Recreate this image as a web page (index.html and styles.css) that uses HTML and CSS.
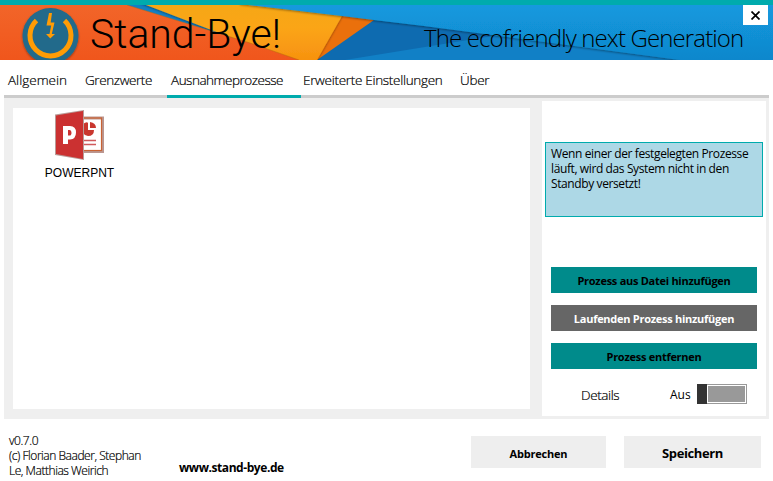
FILE: index.html
```html
<!DOCTYPE html>
<html lang="de">
<head>
<meta charset="utf-8">
<title>Stand-Bye!</title>
<link rel="stylesheet" href="styles.css">
</head>
<body>
<div class="window">
  <header class="banner">
    <svg class="banner-art" viewBox="0 5 773 55" width="773" height="55" aria-hidden="true">
      <defs>
        <linearGradient id="red" x1="0" y1="0" x2="0" y2="1"><stop offset="0" stop-color="#f26529"/><stop offset="1" stop-color="#f0561c"/></linearGradient>
        <linearGradient id="blue" x1="0" y1="0" x2="0" y2="1"><stop offset="0" stop-color="#139be0"/><stop offset="1" stop-color="#1087cc"/></linearGradient>
        <linearGradient id="gold" x1="0" y1="0" x2="0" y2="1"><stop offset="0" stop-color="#f3a813"/><stop offset=".5" stop-color="#fba519"/><stop offset="1" stop-color="#f7920f"/></linearGradient>
        <filter id="shade" x="-20%" y="-30%" width="140%" height="160%"><feDropShadow dx="0" dy="1" stdDeviation="1.2" flood-color="#000" flood-opacity=".4"/></filter>
      </defs>
      <rect y="5" width="773" height="55" fill="#1180c6"/>
      <path d="M374 20 505 34 345 60H310Z" fill="#0e6bb0"/>
      <path d="M342 10 374 20 317 60H290Z" fill="#ea700c"/>
      <path d="M120 -5H345L342 16 317 60H290Z" fill="url(#gold)" filter="url(#shade)"/>
      <path d="M0 5H127L250 43 299 60H0Z" fill="url(#red)"/>
      <path d="M127 5 250 43 299 60" fill="none" stroke="#b86a10" stroke-width="1" opacity=".5"/>
      <path d="M240 4 342 16 374 20 424 26 680 60H790V0H240Z" fill="url(#blue)" filter="url(#shade)"/>
      <circle cx="50.500" cy="36" r="28" fill="#206b8b" filter="url(#shade)"/>
      <path d="M36.500 20.500A20.500 20.500 0 1 0 64.500 20.500" fill="none" stroke="#ff9c05" stroke-width="5"/>
      <path d="M49 13H52L50.700 22.500H54.500L51.800 34H55L50.300 38.500 46 34H49.500L51.200 25.500H46.500Z" fill="#ff9c05"/>
    </svg>
    <h1 class="brand">Stand-Bye!</h1>
    <p class="tagline">The ecofriendly next Generation</p>
    <button class="close" aria-label="Schließen"><svg width="9" height="9" viewBox="0 0 9 9"><path d="M.5.5 8.500 8.500M8.500.5.5 8.500" stroke="#000" stroke-width="1.700"/></svg></button>
  </header>
  <nav class="tabs">
    <a class="tab t1">Allgemein</a><a class="tab t2">Grenzwerte</a><a class="tab t3 active">Ausnahmeprozesse</a><a class="tab t4">Erweiterte Einstellungen</a><a class="tab t5">Über</a>
  </nav>
  <main class="panel">
    <section class="processes">
      <div class="process">
        <svg width="50" height="51" viewBox="0 0 50 51" aria-hidden="true">
          <rect x="25" y="8" width="22.500" height="33.500" fill="#fff" stroke="#bb9690" stroke-width="3"/>
          <rect x="25" y="8" width="21.500" height="32.500" fill="none" stroke="#ca6333" stroke-width="1.200"/>
          <path d="M28 14Q32 11 33 13V20H39Q39 26 33 26 30 26 28 23Z" fill="#c9372f"/>
          <path d="M35 12Q41 13 41 18H35Z" fill="#c9372f"/>
          <path d="M28 30.500H41M28 34.500H41" stroke="#d05a5c" stroke-width="1.700"/>
          <path d="M0 4.500 29 0V50L0 45Z" fill="#b99b97"/>
          <path d="M1 5.500 28 1V49L1 44Z" fill="#cb3131"/>
          <path fill-rule="evenodd" d="M8 16H15Q21 16 21 22.500T15 29.500H13V34H8ZM13 20V25.500H14.500Q16.500 25.500 16.500 22.700T14.500 20Z" fill="#fff"/>
        </svg>
        <span class="process-name">POWERPNT</span>
      </div>
    </section>
    <aside class="side">
      <p class="info">Wenn einer der festgelegten Prozesse<br>läuft, wird das System nicht in den<br>Standby versetzt!</p>
      <div class="actions">
        <button class="action">Prozess aus Datei hinzufügen</button>
        <button class="action hover">Laufenden Prozess hinzufügen</button>
        <button class="action">Prozess entfernen</button>
      </div>
      <div class="details">
        <span class="details-label">Details</span>
        <span class="state">Aus</span>
        <span class="toggle"><span class="knob"></span><span class="track"></span></span>
      </div>
    </aside>
  </main>
  <footer class="footer">
    <p class="about">v0.7.0<br>(c) Florian Baader, Stephan<br>Le, Matthias Weirich</p>
    <a class="site">www.stand-bye.de</a>
    <button class="cancel">Abbrechen</button>
    <button class="save">Speichern</button>
  </footer>
</div>
</body>
</html>
```
FILE: styles.css
```css
* { box-sizing: border-box; }
body { margin: 0; background: #fff; color: #000; font-family: "Open Sans", "Noto Sans", sans-serif; }
h1, p { margin: 0; font-weight: 300; }
button { border: 0; padding: 0; margin: 0; font-family: inherit; color: #000; }
.window { width: 773px; height: 481px; overflow: hidden; display: flex; flex-direction: column; }
.banner { position: relative; height: 60px; flex: none; border-top: 5px solid #00abad; display: flex; overflow: hidden; white-space: nowrap; }
.banner-art { position: absolute; left: 0; top: 0; }
.brand { position: relative; margin-left: 90px; width: 334px; font: 300 41px/58px Roboto, sans-serif; letter-spacing: -0.05px; }
.tagline { position: relative; padding-top: 16px; width: 319px; font-size: 24px; line-height: 33px; letter-spacing: -0.87px; }
.close { position: absolute; right: 5px; top: 0; width: 25px; height: 20px; background: #fff; display: grid; place-items: center; }

.tabs { display: flex; height: 38px; flex: none; margin: 0 4px; border-bottom: 3px solid #ccc; font-size: 13.5px; font-weight: 300; line-height: 40px; white-space: nowrap; }
.tab { height: 38px; letter-spacing: -0.3px; padding-left: 4px; -webkit-text-stroke: 0.2px #000; }
.t1 { width: 77px; letter-spacing: 0; }
.t2 { width: 86px; letter-spacing: -0.4px; }
.t3 { width: 134px; letter-spacing: -0.48px; }
.t4 { width: 157px; padding-left: 2px; }
.t5 { padding-left: 2px; }
.active { border-bottom: 3px solid #00abad; }

.panel { display: flex; justify-content: space-between; height: 321px; flex: none; margin: 0 4px; padding: 3px 3px 3px 9px; background: #efefef; }
.processes { width: 517px; height: 301px; margin-top: 7px; background: #fff; }
.process { display: flex; flex-direction: column; align-items: center; width: 133px; padding-top: 2px; }
.process-name { font: 12px/16px "Liberation Sans", Arial, sans-serif; margin-top: 4px; }
.side { width: 224px; padding: 41px 3px 0; background: #fff; white-space: nowrap; }
.info { width: 218px; height: 75px; border: 1px solid #00abad; background: #add8e6; padding: 3px 5px; font-size: 12px; font-weight: 400; line-height: 15px; letter-spacing: -0.39px; }
.actions { display: flex; flex-direction: column; gap: 12px; padding: 50px 6px 0; }
.action { height: 26px; padding-top: 2px; background: #008b8b; font-size: 11px; line-height: 24px; font-weight: 700; letter-spacing: -0.27px; }
.hover { background: #666; color: #fff; }
.details { display: flex; margin-top: 15px; padding-left: 36px; line-height: 22px; }
.details-label { width: 89px; font-size: 13.5px; font-weight: 300; letter-spacing: -0.4px; -webkit-text-stroke: 0.2px #000; }
.state { width: 27px; font-size: 12px; }
.toggle { display: flex; width: 50px; height: 20px; border: 1px solid #999; background: #fff; }
.knob { width: 10px; height: 20px; margin: -1px 0 0 -1px; background: #333; }
.track { flex: 1; margin: 1px 1px 1px 1px; background: #999; }

.footer { display: flex; align-items: flex-start; padding: 14px 12px 0 9px; white-space: nowrap; }
.about { width: 170px; font-size: 12px; line-height: 15px; letter-spacing: -0.46px; -webkit-text-stroke: 0.2px #000; }
.site { width: 292px; margin-top: 26px; font-size: 12px; font-weight: 700; line-height: 18px; letter-spacing: -0.43px; }
.cancel, .save { height: 32px; margin-top: 3px; background: #eee; font-weight: 700; padding-top: 2px; }
.cancel { width: 135px; font-size: 11px; letter-spacing: -0.2px; }
.save { width: 137px; margin-left: 18px; font-size: 13px; letter-spacing: -0.4px; }
```
